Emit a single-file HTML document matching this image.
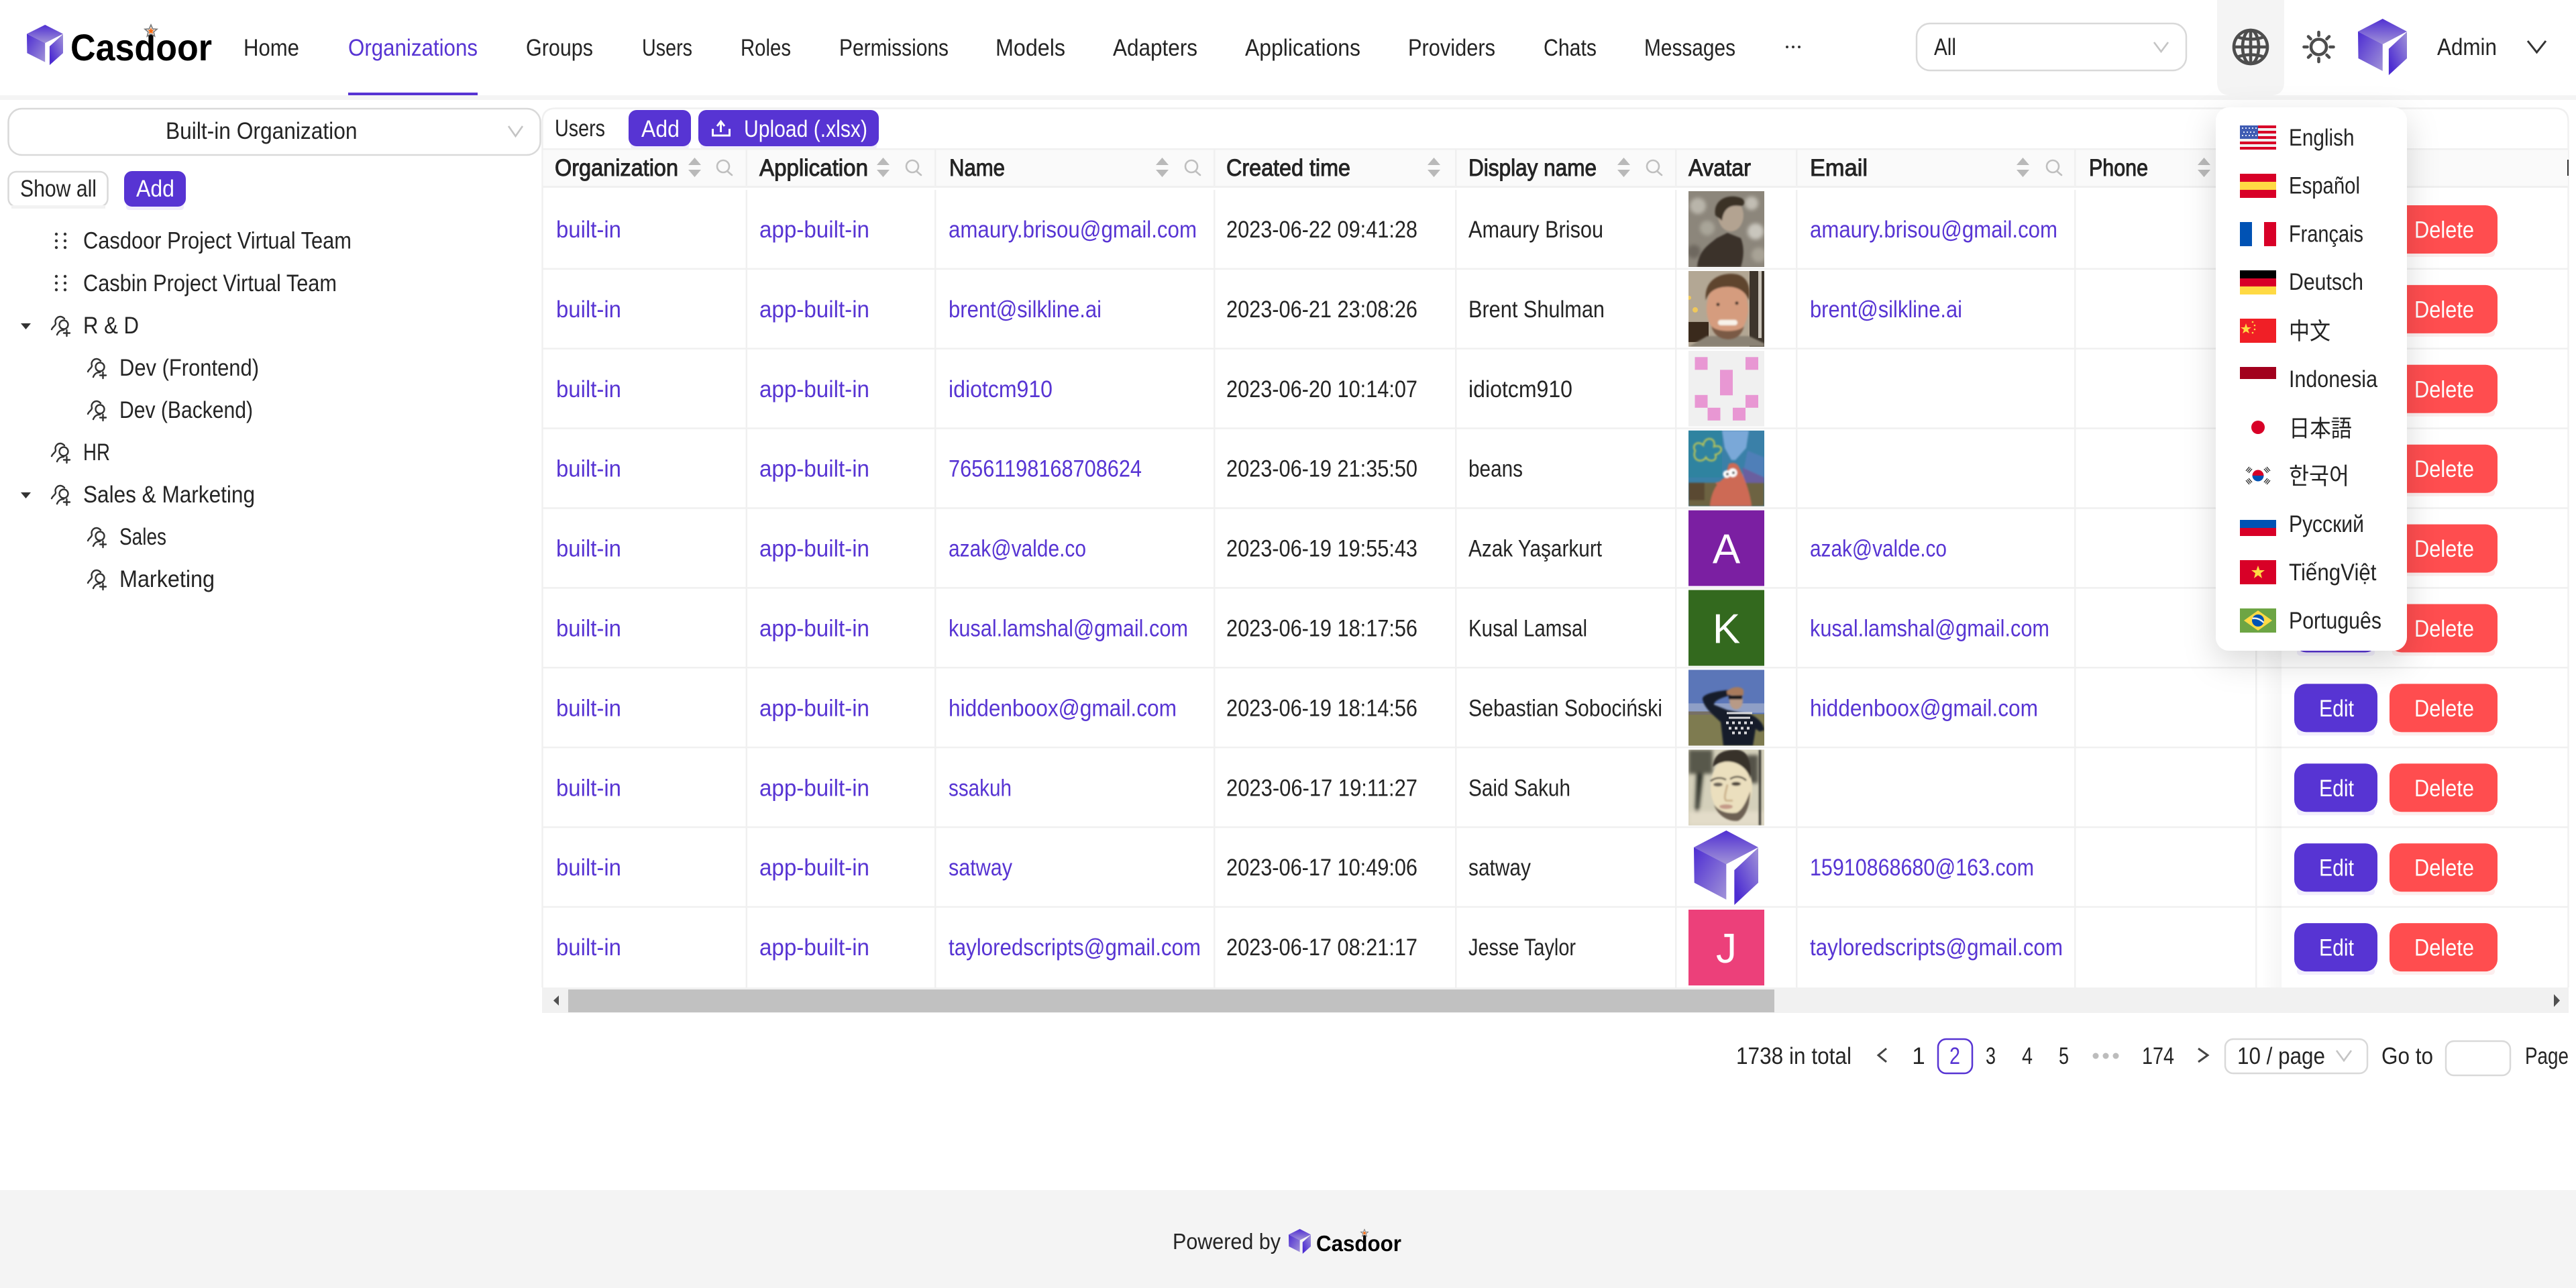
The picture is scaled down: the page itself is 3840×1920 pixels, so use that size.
<!DOCTYPE html>
<html lang="en">
<head>
<meta charset="utf-8">
<title>Casdoor - Users</title>
<style>
html,body{margin:0;padding:0;background:#fff;width:3840px;height:1920px;overflow:hidden}
svg{display:block}
text{font-family:"Liberation Sans","Noto Sans CJK SC",sans-serif;font-size:35px;fill:#242424}
.l{fill:#5734d3}
.w{fill:#fff}
.h{stroke:#242424;stroke-width:1px}
.logo{font-weight:700;fill:#000}
.ln{fill:#f0f0f0}
.btn{fill:#5734d3}
.del{fill:#ff4d4f}
.ico{fill:none;stroke:#333;stroke-width:2.4;stroke-linecap:round}
.sg{fill:#b9b9b9}
.sr{fill:none;stroke:#bfbfbf;stroke-width:2.6;stroke-linecap:round}
.chev{fill:none;stroke:#c4c4c4;stroke-width:2.6}
.box{fill:#fff;stroke:#d9d9d9;stroke-width:2.5}
</style>
</head>
<body>
<svg xmlns="http://www.w3.org/2000/svg" width="3840" height="1920" viewBox="0 0 3840 1920">
<defs>
<linearGradient id="gt" x1="0" y1="0" x2="0" y2="1"><stop offset="0" stop-color="#5030d2"/><stop offset="1" stop-color="#a193d8"/></linearGradient>
<linearGradient id="gl" x1="0" y1="0" x2="1" y2="1"><stop offset="0" stop-color="#4c2cd2"/><stop offset="1" stop-color="#a193d8"/></linearGradient>
<linearGradient id="gr" x1="0" y1="1" x2="1" y2="0"><stop offset=".15" stop-color="#4c2cd2"/><stop offset="1" stop-color="#a193d8"/></linearGradient>
<linearGradient id="fix" x1="0" y1="0" x2="1" y2="0"><stop offset="0" stop-color="#000" stop-opacity="0"/><stop offset="1" stop-color="#000" stop-opacity=".035"/></linearGradient>
<symbol id="cube" viewBox="0 0 288 332" preserveAspectRatio="none">
<polygon points="145,0 288,75 145,150 0,75" fill="url(#gt)"/>
<polygon points="0,75 145,150 145,308 2,233" fill="url(#gl)"/>
<polygon points="288,77 181,177 181,332 288,233" fill="url(#gr)"/>
</symbol>
<g id="sort"><polygon class="sg" points="9.5,235 19,246 0,246"/><polygon class="sg" points="0,253 19,253 9.5,264"/></g>
<g id="srch"><circle class="sr" cx="10" cy="248" r="9"/><path class="sr" d="M16 255 L23 261"/></g>
<g id="ci"><circle class="ico" cx="19" cy="13" r="6.5"/><path class="ico" d="M1 20 C3 15 7 15 7 11 C5 5 10 1 14 1 C17 1 19 3 20 4"/><path class="ico" d="M9 28 C11 23 14 21 19 21"/><path class="ico" d="M23.5 21 v9 M19 25.5 h9"/></g>
<g id="grip" fill="#333"><circle cx="3" cy="3" r="2.2"/><circle cx="16" cy="3" r="2.2"/><circle cx="3" cy="13" r="2.2"/><circle cx="16" cy="13" r="2.2"/><circle cx="3" cy="23" r="2.2"/><circle cx="16" cy="23" r="2.2"/></g>
<g id="star"><polygon points="0,-9 2.6,-3 9,-2.6 4,1.6 5.6,8 0,4.6 -5.6,8 -4,1.6 -9,-2.6 -2.6,-3" fill="#fff" stroke="#777" stroke-width="1.6"/><polygon points="0,-5 1.5,-1.5 5,-1.5 2.3,1 3.2,4.6 0,2.6 -3.2,4.6 -2.3,1 -5,-1.5 -1.5,-1.5" fill="#f46a12"/></g>
<filter id="ds" x="-30%" y="-15%" width="160%" height="135%"><feDropShadow dx="0" dy="16" stdDeviation="24" flood-color="#000" flood-opacity=".15"/></filter>
<filter id="b1" x="-5%" y="-5%" width="110%" height="110%"><feGaussianBlur stdDeviation="1.3"/></filter>
<filter id="b2" x="-10%" y="-10%" width="120%" height="120%"><feGaussianBlur stdDeviation="3"/></filter>
</defs>

<!-- header -->
<rect x="0" y="142" width="3840" height="7" fill="#f4f4f4"/>
<use href="#cube" x="40" y="37" width="54" height="60"/>
<text class="logo" x="105" y="90" textLength="211" lengthAdjust="spacingAndGlyphs" style="font-size:56px">Casdoor</text>
<use href="#star" transform="translate(225,46)"/>
<text x="363" y="83" textLength="83" lengthAdjust="spacingAndGlyphs">Home</text>
<text class="l" x="519" y="83" textLength="193" lengthAdjust="spacingAndGlyphs">Organizations</text>
<rect x="519" y="138" width="193" height="4" class="btn"/>
<text x="784" y="83" textLength="100" lengthAdjust="spacingAndGlyphs">Groups</text>
<text x="957" y="83" textLength="75" lengthAdjust="spacingAndGlyphs">Users</text>
<text x="1104" y="83" textLength="75" lengthAdjust="spacingAndGlyphs">Roles</text>
<text x="1251" y="83" textLength="163" lengthAdjust="spacingAndGlyphs">Permissions</text>
<text x="1484" y="83" textLength="104" lengthAdjust="spacingAndGlyphs">Models</text>
<text x="1659" y="83" textLength="126" lengthAdjust="spacingAndGlyphs">Adapters</text>
<text x="1856" y="83" textLength="172" lengthAdjust="spacingAndGlyphs">Applications</text>
<text x="2099" y="83" textLength="130" lengthAdjust="spacingAndGlyphs">Providers</text>
<text x="2301" y="83" textLength="79" lengthAdjust="spacingAndGlyphs">Chats</text>
<text x="2451" y="83" textLength="136" lengthAdjust="spacingAndGlyphs">Messages</text>
<g fill="#333"><circle cx="2664" cy="70" r="2"/><circle cx="2673" cy="70" r="2"/><circle cx="2682" cy="70" r="2"/></g>

<rect class="box" x="2857" y="35" width="402" height="70" rx="20"/>
<text x="2883" y="82" textLength="33" lengthAdjust="spacingAndGlyphs">All</text>
<path class="chev" d="M3211 63 L3221.5 77 L3232 63"/>

<path d="M3305 0 H3405 V122 Q3405 142 3385 142 H3325 Q3305 142 3305 122 Z" fill="#f4f4f4"/>
<g fill="none" stroke="#4d4d4d" stroke-width="4.6">
<circle cx="3355" cy="70" r="25"/>
<ellipse cx="3355" cy="70" rx="12" ry="25"/>
<path d="M3355 45 V95 M3330 70 H3380 M3335 55 Q3355 62 3375 55 M3335 85 Q3355 78 3375 85"/>
</g>
<g fill="none" stroke="#4d4d4d" stroke-width="4.6" stroke-linecap="round">
<circle cx="3456.5" cy="70" r="11.5"/>
<path d="M3456.5 48 V53 M3456.5 87 V92 M3434.5 70 H3439.5 M3473.5 70 H3478.5 M3441 54.500 L3444.500 58 M3468.500 82 L3472 85.500 M3441 85.500 L3444.500 82 M3468.500 58 L3472 54.500"/>
</g>
<use href="#cube" x="3515" y="28" width="73" height="84"/>
<text x="3633" y="82" textLength="89" lengthAdjust="spacingAndGlyphs">Admin</text>
<path d="M3768 61 L3781.500 78 L3795 61" fill="none" stroke="#333" stroke-width="3"/>

<!-- left panel -->
<rect class="box" x="12.500" y="162" width="793" height="69" rx="20"/>
<text x="247" y="207" textLength="285.500" lengthAdjust="spacingAndGlyphs">Built-in Organization</text>
<path class="chev" d="M758 188 L768.500 203 L779 188"/>
<rect class="box" x="12.500" y="256" width="148" height="52" rx="12"/>
<rect x="17" y="306" width="140" height="5" fill="#f2f2f2"/>
<text x="30" y="293" textLength="114" lengthAdjust="spacingAndGlyphs">Show all</text>
<rect x="188" y="303" width="86" height="10" rx="4" fill="#f0ecfc"/>
<rect class="btn" x="185" y="255" width="92" height="53" rx="12"/>
<text class="w" x="203" y="293" textLength="57" lengthAdjust="spacingAndGlyphs">Add</text>

<use href="#grip" x="81" y="346"/>
<text x="124" y="370.500" textLength="400" lengthAdjust="spacingAndGlyphs">Casdoor Project Virtual Team</text>
<use href="#grip" x="81" y="409"/>
<text x="124" y="434" textLength="378" lengthAdjust="spacingAndGlyphs">Casbin Project Virtual Team</text>
<polygon points="31,482 46,482 38.500,491" fill="#333"/>
<use href="#ci" x="76" y="471"/>
<text x="124" y="497" textLength="83" lengthAdjust="spacingAndGlyphs">R &amp; D</text>
<use href="#ci" x="130" y="534"/>
<text x="178" y="560" textLength="208" lengthAdjust="spacingAndGlyphs">Dev (Frontend)</text>
<use href="#ci" x="130" y="597"/>
<text x="178" y="623" textLength="199" lengthAdjust="spacingAndGlyphs">Dev (Backend)</text>
<use href="#ci" x="76" y="660"/>
<text x="124" y="686" textLength="40" lengthAdjust="spacingAndGlyphs">HR</text>
<polygon points="31,734 46,734 38.500,743" fill="#333"/>
<use href="#ci" x="76" y="723"/>
<text x="124" y="749" textLength="256" lengthAdjust="spacingAndGlyphs">Sales &amp; Marketing</text>
<use href="#ci" x="130" y="786"/>
<text x="178" y="812" textLength="70" lengthAdjust="spacingAndGlyphs">Sales</text>
<use href="#ci" x="130" y="849"/>
<text x="178" y="875" textLength="142" lengthAdjust="spacingAndGlyphs">Marketing</text>

<!-- table card -->
<path d="M808.500 1472 V181 Q808.500 161.500 828 161.500 H3809 Q3828.500 161.500 3828.500 181 V1472" fill="none" stroke="#f0f0f0" stroke-width="2.500"/>
<text x="827" y="203" textLength="75" lengthAdjust="spacingAndGlyphs">Users</text>
<rect x="940" y="210" width="87" height="13" rx="5" fill="#f0ecfc"/>
<rect x="1044" y="210" width="263" height="13" rx="5" fill="#f0ecfc"/>
<rect class="btn" x="937" y="164" width="93" height="54" rx="12"/>
<text class="w" x="956" y="204" textLength="57" lengthAdjust="spacingAndGlyphs">Add</text>
<rect class="btn" x="1041" y="164" width="269" height="54" rx="12"/>
<path d="M1074.500 182 V197 M1069 188 L1074.500 181 L1080 188 M1062.500 192 V202 H1087.500 V192" fill="none" stroke="#fff" stroke-width="3"/>
<text class="w" x="1109" y="204" textLength="184" lengthAdjust="spacingAndGlyphs">Upload (.xlsx)</text>

<rect x="810" y="223" width="3018" height="54" fill="#fafafa"/>
<rect class="ln" x="809" y="221" width="3020" height="2.500"/>
<rect class="ln" x="809" y="277" width="3020" height="3"/>
<!-- vertical separators -->
<g class="ln">
<rect x="1111.500" y="223" width="2.500" height="54"/><rect x="1393" y="223" width="2.500" height="54"/><rect x="1809" y="223" width="2.500" height="54"/><rect x="2169" y="223" width="2.500" height="54"/><rect x="2497" y="223" width="2.500" height="54"/><rect x="2677" y="223" width="2.500" height="54"/><rect x="3092" y="223" width="2.500" height="54"/>
<rect x="1111.500" y="283" width="2.500" height="1189"/><rect x="1393" y="283" width="2.500" height="1189"/><rect x="1809" y="283" width="2.500" height="1189"/><rect x="2169" y="283" width="2.500" height="1189"/><rect x="2497" y="283" width="2.500" height="1189"/><rect x="2677" y="283" width="2.500" height="1189"/><rect x="3092" y="283" width="2.500" height="1189"/><rect x="3362" y="283" width="2.500" height="1189"/>
<rect x="809" y="399.500" width="3020" height="2.500"/><rect x="809" y="518.400" width="3020" height="2.500"/><rect x="809" y="637.300" width="3020" height="2.500"/><rect x="809" y="756.200" width="3020" height="2.500"/><rect x="809" y="875.100" width="3020" height="2.500"/><rect x="809" y="994" width="3020" height="2.500"/><rect x="809" y="1112.900" width="3020" height="2.500"/><rect x="809" y="1231.800" width="3020" height="2.500"/><rect x="809" y="1350.700" width="3020" height="2.500"/>
</g>
<rect x="3371" y="280" width="30" height="1192" fill="url(#fix)"/>

<!-- table head -->
<g class="hd">
<text class="h" x="827" y="262" textLength="184" lengthAdjust="spacingAndGlyphs">Organization</text><use href="#sort" x="1026"/><use href="#srch" x="1068"/>
<text class="h" x="1132" y="262" textLength="162" lengthAdjust="spacingAndGlyphs">Application</text><use href="#sort" x="1307"/><use href="#srch" x="1350"/>
<text class="h" x="1415" y="262" textLength="83" lengthAdjust="spacingAndGlyphs">Name</text><use href="#sort" x="1723"/><use href="#srch" x="1766"/>
<text class="h" x="1828" y="262" textLength="185" lengthAdjust="spacingAndGlyphs">Created time</text><use href="#sort" x="2128"/>
<text class="h" x="2189" y="262" textLength="191" lengthAdjust="spacingAndGlyphs">Display name</text><use href="#sort" x="2411"/><use href="#srch" x="2454"/>
<text class="h" x="2517" y="262" textLength="93" lengthAdjust="spacingAndGlyphs">Avatar</text>
<text class="h" x="2698" y="262" textLength="86" lengthAdjust="spacingAndGlyphs">Email</text><use href="#sort" x="3006"/><use href="#srch" x="3050"/>
<text class="h" x="3114" y="262" textLength="88" lengthAdjust="spacingAndGlyphs">Phone</text><use href="#sort" x="3276"/>
<rect x="3827" y="238" width="2" height="24" fill="#333"/>
</g>

<!-- rows -->
<g>
<text class="l" x="829" y="354" textLength="97" lengthAdjust="spacingAndGlyphs">built-in</text><text class="l" x="1132" y="354" textLength="164" lengthAdjust="spacingAndGlyphs">app-built-in</text>
<text class="l" x="1414" y="354" textLength="370" lengthAdjust="spacingAndGlyphs">amaury.brisou@gmail.com</text>
<text x="1828" y="354" textLength="285" lengthAdjust="spacingAndGlyphs">2023-06-22 09:41:28</text>
<text x="2189" y="354" textLength="201" lengthAdjust="spacingAndGlyphs">Amaury Brisou</text>
<text class="l" x="2698" y="354" textLength="369" lengthAdjust="spacingAndGlyphs">amaury.brisou@gmail.com</text>
</g>
<g transform="translate(0,118.900)">
<text class="l" x="829" y="354" textLength="97" lengthAdjust="spacingAndGlyphs">built-in</text><text class="l" x="1132" y="354" textLength="164" lengthAdjust="spacingAndGlyphs">app-built-in</text>
<text class="l" x="1414" y="354" textLength="228" lengthAdjust="spacingAndGlyphs">brent@silkline.ai</text>
<text x="1828" y="354" textLength="285" lengthAdjust="spacingAndGlyphs">2023-06-21 23:08:26</text>
<text x="2189" y="354" textLength="203" lengthAdjust="spacingAndGlyphs">Brent Shulman</text>
<text class="l" x="2698" y="354" textLength="227" lengthAdjust="spacingAndGlyphs">brent@silkline.ai</text>
</g>
<g transform="translate(0,237.800)">
<text class="l" x="829" y="354" textLength="97" lengthAdjust="spacingAndGlyphs">built-in</text><text class="l" x="1132" y="354" textLength="164" lengthAdjust="spacingAndGlyphs">app-built-in</text>
<text class="l" x="1414" y="354" textLength="155" lengthAdjust="spacingAndGlyphs">idiotcm910</text>
<text x="1828" y="354" textLength="285" lengthAdjust="spacingAndGlyphs">2023-06-20 10:14:07</text>
<text x="2189" y="354" textLength="155" lengthAdjust="spacingAndGlyphs">idiotcm910</text>
</g>
<g transform="translate(0,356.700)">
<text class="l" x="829" y="354" textLength="97" lengthAdjust="spacingAndGlyphs">built-in</text><text class="l" x="1132" y="354" textLength="164" lengthAdjust="spacingAndGlyphs">app-built-in</text>
<text class="l" x="1414" y="354" textLength="288" lengthAdjust="spacingAndGlyphs">76561198168708624</text>
<text x="1828" y="354" textLength="285" lengthAdjust="spacingAndGlyphs">2023-06-19 21:35:50</text>
<text x="2189" y="354" textLength="81" lengthAdjust="spacingAndGlyphs">beans</text>
</g>
<g transform="translate(0,475.600)">
<text class="l" x="829" y="354" textLength="97" lengthAdjust="spacingAndGlyphs">built-in</text><text class="l" x="1132" y="354" textLength="164" lengthAdjust="spacingAndGlyphs">app-built-in</text>
<text class="l" x="1414" y="354" textLength="205" lengthAdjust="spacingAndGlyphs">azak@valde.co</text>
<text x="1828" y="354" textLength="285" lengthAdjust="spacingAndGlyphs">2023-06-19 19:55:43</text>
<text x="2189" y="354" textLength="199" lengthAdjust="spacingAndGlyphs">Azak Yaşarkurt</text>
<text class="l" x="2698" y="354" textLength="204" lengthAdjust="spacingAndGlyphs">azak@valde.co</text>
</g>
<g transform="translate(0,594.500)">
<text class="l" x="829" y="354" textLength="97" lengthAdjust="spacingAndGlyphs">built-in</text><text class="l" x="1132" y="354" textLength="164" lengthAdjust="spacingAndGlyphs">app-built-in</text>
<text class="l" x="1414" y="354" textLength="357" lengthAdjust="spacingAndGlyphs">kusal.lamshal@gmail.com</text>
<text x="1828" y="354" textLength="285" lengthAdjust="spacingAndGlyphs">2023-06-19 18:17:56</text>
<text x="2189" y="354" textLength="177" lengthAdjust="spacingAndGlyphs">Kusal Lamsal</text>
<text class="l" x="2698" y="354" textLength="357" lengthAdjust="spacingAndGlyphs">kusal.lamshal@gmail.com</text>
</g>
<g transform="translate(0,713.400)">
<text class="l" x="829" y="354" textLength="97" lengthAdjust="spacingAndGlyphs">built-in</text><text class="l" x="1132" y="354" textLength="164" lengthAdjust="spacingAndGlyphs">app-built-in</text>
<text class="l" x="1414" y="354" textLength="340" lengthAdjust="spacingAndGlyphs">hiddenboox@gmail.com</text>
<text x="1828" y="354" textLength="285" lengthAdjust="spacingAndGlyphs">2023-06-19 18:14:56</text>
<text x="2189" y="354" textLength="289" lengthAdjust="spacingAndGlyphs">Sebastian Sobociński</text>
<text class="l" x="2698" y="354" textLength="340" lengthAdjust="spacingAndGlyphs">hiddenboox@gmail.com</text>
</g>
<g transform="translate(0,832.300)">
<text class="l" x="829" y="354" textLength="97" lengthAdjust="spacingAndGlyphs">built-in</text><text class="l" x="1132" y="354" textLength="164" lengthAdjust="spacingAndGlyphs">app-built-in</text>
<text class="l" x="1414" y="354" textLength="94" lengthAdjust="spacingAndGlyphs">ssakuh</text>
<text x="1828" y="354" textLength="285" lengthAdjust="spacingAndGlyphs">2023-06-17 19:11:27</text>
<text x="2189" y="354" textLength="152" lengthAdjust="spacingAndGlyphs">Said Sakuh</text>
</g>
<g transform="translate(0,951.200)">
<text class="l" x="829" y="354" textLength="97" lengthAdjust="spacingAndGlyphs">built-in</text><text class="l" x="1132" y="354" textLength="164" lengthAdjust="spacingAndGlyphs">app-built-in</text>
<text class="l" x="1414" y="354" textLength="95" lengthAdjust="spacingAndGlyphs">satway</text>
<text x="1828" y="354" textLength="285" lengthAdjust="spacingAndGlyphs">2023-06-17 10:49:06</text>
<text x="2189" y="354" textLength="93" lengthAdjust="spacingAndGlyphs">satway</text>
<text class="l" x="2698" y="354" textLength="334" lengthAdjust="spacingAndGlyphs">15910868680@163.com</text>
</g>
<g transform="translate(0,1070.100)">
<text class="l" x="829" y="354" textLength="97" lengthAdjust="spacingAndGlyphs">built-in</text><text class="l" x="1132" y="354" textLength="164" lengthAdjust="spacingAndGlyphs">app-built-in</text>
<text class="l" x="1414" y="354" textLength="376" lengthAdjust="spacingAndGlyphs">tayloredscripts@gmail.com</text>
<text x="1828" y="354" textLength="285" lengthAdjust="spacingAndGlyphs">2023-06-17 08:21:17</text>
<text x="2189" y="354" textLength="160" lengthAdjust="spacingAndGlyphs">Jesse Taylor</text>
<text class="l" x="2698" y="354" textLength="377" lengthAdjust="spacingAndGlyphs">tayloredscripts@gmail.com</text>
</g>

<!-- action buttons -->
<g id="acts">
<g><rect x="3424" y="372" width="116" height="11" rx="5" fill="#f2eefd"/><rect x="3566" y="372" width="153" height="11" rx="5" fill="#fdeeee"/><rect class="btn" x="3420" y="306" width="124" height="72" rx="18"/><text class="w" x="3457" y="354.500" textLength="52" lengthAdjust="spacingAndGlyphs">Edit</text><rect class="del" x="3562" y="306" width="161" height="72" rx="18"/><text class="w" x="3599" y="354.500" textLength="89" lengthAdjust="spacingAndGlyphs">Delete</text></g>
<g transform="translate(0,118.900)"><rect x="3424" y="372" width="116" height="11" rx="5" fill="#f2eefd"/><rect x="3566" y="372" width="153" height="11" rx="5" fill="#fdeeee"/><rect class="btn" x="3420" y="306" width="124" height="72" rx="18"/><text class="w" x="3457" y="354.500" textLength="52" lengthAdjust="spacingAndGlyphs">Edit</text><rect class="del" x="3562" y="306" width="161" height="72" rx="18"/><text class="w" x="3599" y="354.500" textLength="89" lengthAdjust="spacingAndGlyphs">Delete</text></g>
<g transform="translate(0,237.800)"><rect x="3424" y="372" width="116" height="11" rx="5" fill="#f2eefd"/><rect x="3566" y="372" width="153" height="11" rx="5" fill="#fdeeee"/><rect class="btn" x="3420" y="306" width="124" height="72" rx="18"/><text class="w" x="3457" y="354.500" textLength="52" lengthAdjust="spacingAndGlyphs">Edit</text><rect class="del" x="3562" y="306" width="161" height="72" rx="18"/><text class="w" x="3599" y="354.500" textLength="89" lengthAdjust="spacingAndGlyphs">Delete</text></g>
<g transform="translate(0,356.700)"><rect x="3424" y="372" width="116" height="11" rx="5" fill="#f2eefd"/><rect x="3566" y="372" width="153" height="11" rx="5" fill="#fdeeee"/><rect class="btn" x="3420" y="306" width="124" height="72" rx="18"/><text class="w" x="3457" y="354.500" textLength="52" lengthAdjust="spacingAndGlyphs">Edit</text><rect class="del" x="3562" y="306" width="161" height="72" rx="18"/><text class="w" x="3599" y="354.500" textLength="89" lengthAdjust="spacingAndGlyphs">Delete</text></g>
<g transform="translate(0,475.600)"><rect x="3424" y="372" width="116" height="11" rx="5" fill="#f2eefd"/><rect x="3566" y="372" width="153" height="11" rx="5" fill="#fdeeee"/><rect class="btn" x="3420" y="306" width="124" height="72" rx="18"/><text class="w" x="3457" y="354.500" textLength="52" lengthAdjust="spacingAndGlyphs">Edit</text><rect class="del" x="3562" y="306" width="161" height="72" rx="18"/><text class="w" x="3599" y="354.500" textLength="89" lengthAdjust="spacingAndGlyphs">Delete</text></g>
<g transform="translate(0,594.500)"><rect x="3424" y="372" width="116" height="11" rx="5" fill="#f2eefd"/><rect x="3566" y="372" width="153" height="11" rx="5" fill="#fdeeee"/><rect class="btn" x="3420" y="306" width="124" height="72" rx="18"/><text class="w" x="3457" y="354.500" textLength="52" lengthAdjust="spacingAndGlyphs">Edit</text><rect class="del" x="3562" y="306" width="161" height="72" rx="18"/><text class="w" x="3599" y="354.500" textLength="89" lengthAdjust="spacingAndGlyphs">Delete</text></g>
<g transform="translate(0,713.400)"><rect x="3424" y="372" width="116" height="11" rx="5" fill="#f2eefd"/><rect x="3566" y="372" width="153" height="11" rx="5" fill="#fdeeee"/><rect class="btn" x="3420" y="306" width="124" height="72" rx="18"/><text class="w" x="3457" y="354.500" textLength="52" lengthAdjust="spacingAndGlyphs">Edit</text><rect class="del" x="3562" y="306" width="161" height="72" rx="18"/><text class="w" x="3599" y="354.500" textLength="89" lengthAdjust="spacingAndGlyphs">Delete</text></g>
<g transform="translate(0,832.300)"><rect x="3424" y="372" width="116" height="11" rx="5" fill="#f2eefd"/><rect x="3566" y="372" width="153" height="11" rx="5" fill="#fdeeee"/><rect class="btn" x="3420" y="306" width="124" height="72" rx="18"/><text class="w" x="3457" y="354.500" textLength="52" lengthAdjust="spacingAndGlyphs">Edit</text><rect class="del" x="3562" y="306" width="161" height="72" rx="18"/><text class="w" x="3599" y="354.500" textLength="89" lengthAdjust="spacingAndGlyphs">Delete</text></g>
<g transform="translate(0,951.200)"><rect x="3424" y="372" width="116" height="11" rx="5" fill="#f2eefd"/><rect x="3566" y="372" width="153" height="11" rx="5" fill="#fdeeee"/><rect class="btn" x="3420" y="306" width="124" height="72" rx="18"/><text class="w" x="3457" y="354.500" textLength="52" lengthAdjust="spacingAndGlyphs">Edit</text><rect class="del" x="3562" y="306" width="161" height="72" rx="18"/><text class="w" x="3599" y="354.500" textLength="89" lengthAdjust="spacingAndGlyphs">Delete</text></g>
<g transform="translate(0,1070.100)"><rect x="3424" y="372" width="116" height="11" rx="5" fill="#f2eefd"/><rect x="3566" y="372" width="153" height="11" rx="5" fill="#fdeeee"/><rect class="btn" x="3420" y="306" width="124" height="72" rx="18"/><text class="w" x="3457" y="354.500" textLength="52" lengthAdjust="spacingAndGlyphs">Edit</text><rect class="del" x="3562" y="306" width="161" height="72" rx="18"/><text class="w" x="3599" y="354.500" textLength="89" lengthAdjust="spacingAndGlyphs">Delete</text></g>
</g>

<!-- avatars -->
<svg x="2517" y="285" width="113" height="113" viewBox="0 0 113 113">
<rect width="113" height="113" fill="#8c867b"/>
<g filter="url(#b2)"><circle cx="14" cy="22" r="12" fill="#b9b5aa"/><circle cx="28" cy="55" r="11" fill="#a9a599"/><circle cx="100" cy="60" r="12" fill="#c9c6bd"/><circle cx="94" cy="18" r="10" fill="#c2beb4"/><circle cx="105" cy="95" r="11" fill="#a8a396"/><circle cx="8" cy="90" r="10" fill="#6e685e"/></g>
<g filter="url(#b1)"><path d="M13 113 C15 88 30 80 42 70 L58 62 L78 70 C84 85 82 100 78 113 Z" fill="#3a332b"/><ellipse cx="63" cy="36" rx="19" ry="24" fill="#b3a391"/><path d="M40 36 C36 12 60 3 78 10 C86 13 84 24 76 22 C62 20 52 26 50 44 Z" fill="#3a3026"/></g>
</svg>
<svg x="2517" y="403.900" width="113" height="113" viewBox="0 0 113 113">
<rect width="113" height="113" fill="#b3a794"/>
<rect x="91" y="0" width="22" height="113" fill="#3d352c"/><rect x="104" y="0" width="5" height="100" fill="#c9c3b8"/>
<rect x="0" y="76" width="30" height="30" fill="#3a2a1c"/>
<circle cx="10" cy="58" r="4" fill="#f0c85a"/><circle cx="1" cy="40" r="3" fill="#f0c85a"/>
<g filter="url(#b1)"><path d="M0 113 L28 97 L90 97 L113 108 V113 Z" fill="#8b8375"/><ellipse cx="58" cy="56" rx="31" ry="42" fill="#d59c7e"/><path d="M26 44 C22 12 50 1 72 5 C90 9 93 28 90 44 C84 28 70 22 52 24 C38 26 30 32 26 44 Z" fill="#5e452f"/><path d="M34 82 C38 98 50 102 60 102 C72 102 80 94 83 82 C76 92 42 92 34 82 Z" fill="#7a5a44"/><rect x="44" y="73" width="29" height="8" rx="4" fill="#f8f3ea"/><circle cx="44" cy="50" r="2.500" fill="#3a2e28"/><circle cx="72" cy="48" r="2.500" fill="#3a2e28"/></g>
</svg>
<svg x="2517" y="522.800" width="113" height="113" viewBox="0 0 113 113">
<rect width="113" height="113" fill="#f0f0f0"/>
<g fill="#e897d3"><rect x="9.500" y="9.500" width="19" height="19"/><rect x="85" y="9.500" width="19" height="19"/><rect x="47" y="28.500" width="19" height="38"/><rect x="9.500" y="66" width="19" height="19"/><rect x="85" y="66" width="19" height="19"/><rect x="28.500" y="85" width="19" height="19"/><rect x="66" y="85" width="19" height="19"/></g>
</svg>
<svg x="2517" y="641.700" width="113" height="113" viewBox="0 0 113 113">
<rect width="113" height="113" fill="#3a80a8"/>
<rect x="0" y="0" width="50" height="70" fill="#2f83a0"/>
<g filter="url(#b1)">
<path d="M50 0 H90 L86 26 L70 44 H64 L54 26 Z" fill="#7aa8d8"/>
<path d="M88 30 L113 40 V70 L80 70 Z" fill="#4f7fb8"/>
<path d="M80 55 L113 70 V92 L85 85 Z" fill="#6a5f9f"/>
<path d="M10 30 C4 22 14 14 22 22 C24 8 42 10 38 24 C52 20 52 34 40 36 C44 46 30 48 26 40 C20 50 4 44 10 30 Z" fill="none" stroke="#b9c458" stroke-width="2.500"/>
<rect x="0" y="78" width="113" height="35" fill="#6d6443"/>
<rect x="0" y="78" width="24" height="26" fill="#5a4a30"/>
<path d="M32 113 C34 92 42 78 54 70 L60 50 C68 46 74 50 76 56 C86 76 92 96 94 113 Z" fill="#cd6a55"/>
<path d="M40 78 L60 72 L58 84 L46 84 Z" fill="#cd6a55"/>
<circle cx="57" cy="65" r="5.500" fill="#fff"/><circle cx="66" cy="63" r="6.500" fill="#fff"/><circle cx="58" cy="65" r="2" fill="#222"/><circle cx="67" cy="63" r="2" fill="#222"/>
</g>
</svg>
<svg x="2517" y="760.600" width="113" height="113" viewBox="0 0 113 113"><rect width="113" height="113" fill="#7b1fa2"/><text class="w" x="56.500" y="79" text-anchor="middle" style="font-size:62px">A</text></svg>
<svg x="2517" y="879.500" width="113" height="113" viewBox="0 0 113 113"><rect width="113" height="113" fill="#33691e"/><text class="w" x="56.500" y="79" text-anchor="middle" style="font-size:62px">K</text></svg>
<svg x="2517" y="998.500" width="113" height="113" viewBox="0 0 113 113">
<rect width="113" height="113" fill="#5b76b8"/><rect y="50" width="113" height="14" fill="#8f9fc6"/>
<rect y="66" width="113" height="47" fill="#7e7b50"/><rect y="62" width="42" height="5" fill="#766f66"/>
<g filter="url(#b1)"><path d="M21 44 C20 36 40 32 60 30 L62 38 C48 42 38 46 38 52 L58 60 L92 66 C104 72 112 80 113 90 L106 92 L100 88 L96 113 L52 113 L48 78 C36 66 24 58 21 44 Z" fill="#121a2b"/><ellipse cx="71" cy="46" rx="10" ry="13" fill="#b89a86"/><path d="M57 32 C66 24 78 24 82 30 L82 38 L58 37 Z" fill="#a87a5c"/><rect x="60" y="38" width="20" height="6" fill="#15151c"/></g>
<g fill="#d9d9dc"><rect x="57" y="63" width="38" height="3"/><rect x="60" y="70" width="32" height="3"/><rect x="56" y="77" width="4" height="4"/><rect x="65" y="77" width="4" height="4"/><rect x="74" y="77" width="4" height="4"/><rect x="83" y="77" width="4" height="4"/><rect x="92" y="77" width="4" height="4"/><rect x="60" y="85" width="4" height="4"/><rect x="69" y="85" width="4" height="4"/><rect x="78" y="85" width="4" height="4"/><rect x="87" y="85" width="4" height="4"/><rect x="65" y="92" width="4" height="4"/><rect x="74" y="92" width="4" height="4"/><rect x="83" y="92" width="4" height="4"/></g>
</svg>
<svg x="2517" y="1117.500" width="113" height="113" viewBox="0 0 113 113">
<rect width="113" height="113" fill="#d4d0bb"/>
<g filter="url(#b2)"><rect x="0" y="0" width="36" height="36" fill="#59584c"/><path d="M12 34 L22 36 L15 94 L10 92 Z" fill="#2a2d26"/><rect x="86" y="8" width="18" height="42" fill="#54524a"/><rect x="0" y="92" width="113" height="21" fill="#e3dcc9"/></g>
<g filter="url(#b1)"><rect x="105" y="0" width="3" height="113" fill="#2c2c26"/>
<ellipse cx="64" cy="56" rx="31" ry="44" fill="#ebdfbe"/>
<path d="M36 26 C38 4 54 0 72 0 C90 2 94 18 92 44 C88 26 70 16 54 18 C46 20 40 22 36 26 Z" fill="#38302a"/>
<path d="M38 82 C44 100 62 108 74 106 C86 100 92 80 92 62 C86 78 80 90 72 94 C58 96 46 92 38 82 Z" fill="#6d6152"/>
<path d="M33 47 C40 41 50 41 56 45" stroke="#4c4238" stroke-width="2.500" fill="none"/><path d="M62 44 C70 38 80 40 86 46" stroke="#4c4238" stroke-width="2.500" fill="none"/>
<ellipse cx="44" cy="52" rx="7" ry="3" fill="#6b6256"/><ellipse cx="71" cy="51" rx="7" ry="3" fill="#50473e"/>
<path d="M58 52 C56 62 52 72 56 76 L66 76" stroke="#cbb28c" stroke-width="3" fill="none"/>
<ellipse cx="56" cy="85" rx="10" ry="3.500" fill="#c49a88"/></g>
</svg>
<use href="#cube" x="2525" y="1238" width="96" height="111"/>
<svg x="2517" y="1356" width="113" height="113" viewBox="0 0 113 113"><rect width="113" height="113" fill="#ec407a"/><text class="w" x="56.500" y="79" text-anchor="middle" style="font-size:62px">J</text></svg>

<!-- scrollbar -->
<rect x="808" y="1472" width="3021" height="38" fill="#f1f1f1"/>
<rect x="847" y="1475" width="1798" height="34" fill="#c1c1c1"/>
<polygon points="833,1484 833,1499 825,1491.500" fill="#505050"/>
<polygon points="3807,1482 3807,1501 3816,1491.500" fill="#505050"/>

<!-- pagination -->
<text x="2588" y="1586" textLength="172" lengthAdjust="spacingAndGlyphs">1738 in total</text>
<path d="M2812 1563 L2800 1573 L2812 1583" fill="none" stroke="#444" stroke-width="3"/>
<text x="2860" y="1586" text-anchor="middle">1</text>
<rect x="2889" y="1549" width="51" height="51" rx="12" fill="#fff" stroke="#5734d3" stroke-width="2.500"/>
<text class="l" x="2906" y="1586" textLength="16" lengthAdjust="spacingAndGlyphs">2</text>
<text x="2960" y="1586" textLength="15" lengthAdjust="spacingAndGlyphs">3</text>
<text x="3014" y="1586" textLength="16" lengthAdjust="spacingAndGlyphs">4</text>
<text x="3069" y="1586" textLength="15" lengthAdjust="spacingAndGlyphs">5</text>
<g fill="#bcbcbc"><circle cx="3124" cy="1574" r="4.500"/><circle cx="3139" cy="1574" r="4.500"/><circle cx="3154" cy="1574" r="4.500"/></g>
<text x="3193" y="1586" textLength="48" lengthAdjust="spacingAndGlyphs">174</text>
<path d="M3277 1563 L3291 1573 L3277 1583" fill="none" stroke="#444" stroke-width="3"/>
<rect class="box" x="3317" y="1549" width="212" height="51" rx="12"/>
<text x="3335" y="1586" textLength="131" lengthAdjust="spacingAndGlyphs">10 / page</text>
<path class="chev" d="M3483 1566 L3494 1581 L3505 1566"/>
<text x="3550" y="1586" textLength="77" lengthAdjust="spacingAndGlyphs">Go to</text>
<rect class="box" x="3646" y="1552" width="96" height="51" rx="12"/>
<text x="3764" y="1586" textLength="65" lengthAdjust="spacingAndGlyphs">Page</text>

<!-- footer -->
<rect x="0" y="1774" width="3840" height="146" fill="#f4f4f4"/>
<text x="1748" y="1862" textLength="161" lengthAdjust="spacingAndGlyphs" style="font-size:33px">Powered by</text>
<use href="#cube" x="1921" y="1832" width="33" height="37"/>
<text class="logo" x="1962" y="1865" textLength="127" lengthAdjust="spacingAndGlyphs" style="font-size:33px">Casdoor</text>
<use href="#star" transform="translate(2034,1838) scale(.6)"/>

<!-- language dropdown -->
<rect x="3303" y="160" width="285" height="810" rx="20" fill="#fff" filter="url(#ds)"/>
<g>
<rect x="3339" y="187" width="54" height="36" fill="#f0f0f0"/>
<g fill="#d80027"><rect x="3339" y="187" width="54" height="4"/><rect x="3339" y="195" width="54" height="4"/><rect x="3339" y="203" width="54" height="4"/><rect x="3339" y="211" width="54" height="4"/><rect x="3339" y="219" width="54" height="4"/></g>
<rect x="3339" y="187" width="27" height="20" fill="#3f5cb3"/>
<g fill="#dfe4f5"><rect x="3342" y="190" width="2" height="2"/><rect x="3347" y="190" width="2" height="2"/><rect x="3352" y="190" width="2" height="2"/><rect x="3357" y="190" width="2" height="2"/><rect x="3362" y="190" width="2" height="2"/><rect x="3344" y="196" width="2" height="2"/><rect x="3349" y="196" width="2" height="2"/><rect x="3354" y="196" width="2" height="2"/><rect x="3359" y="196" width="2" height="2"/><rect x="3342" y="201" width="2" height="2"/><rect x="3347" y="201" width="2" height="2"/><rect x="3352" y="201" width="2" height="2"/><rect x="3357" y="201" width="2" height="2"/><rect x="3362" y="201" width="2" height="2"/></g>
<text x="3412" y="217" textLength="97.500" lengthAdjust="spacingAndGlyphs">English</text>

<rect x="3339" y="259" width="54" height="36" fill="#d80027"/><rect x="3339" y="271" width="54" height="12" fill="#ffda44"/>
<text x="3412" y="288.500" textLength="106" lengthAdjust="spacingAndGlyphs">Español</text>

<rect x="3339" y="331" width="18" height="36" fill="#0052b4"/><rect x="3375" y="331" width="18" height="36" fill="#d80027"/>
<text x="3412" y="360.500" textLength="111" lengthAdjust="spacingAndGlyphs">Français</text>

<rect x="3339" y="403" width="54" height="12" fill="#000"/><rect x="3339" y="415" width="54" height="12" fill="#d80027"/><rect x="3339" y="427" width="54" height="12" fill="#ffda44"/>
<text x="3412" y="432" textLength="111" lengthAdjust="spacingAndGlyphs">Deutsch</text>

<rect x="3339" y="475" width="54" height="36" fill="#f01f26"/>
<polygon points="3348,482 3350,488 3356,488 3351,491.500 3353,497 3348,494 3343,497 3345,491.500 3340,488 3346,488" fill="#ffda44"/>
<g fill="#ffda44"><circle cx="3358" cy="480" r="1.300"/><circle cx="3361" cy="485" r="1.300"/><circle cx="3361" cy="491" r="1.300"/><circle cx="3358" cy="496" r="1.300"/></g>
<text x="3412" y="506" textLength="62" lengthAdjust="spacingAndGlyphs" style="font-family:'Liberation Sans','Noto Sans CJK SC',sans-serif">中文</text>

<rect x="3339" y="547" width="54" height="18" fill="#a2001d"/>
<text x="3412" y="577" textLength="132" lengthAdjust="spacingAndGlyphs">Indonesia</text>

<circle cx="3366" cy="637" r="10" fill="#d80027"/>
<text x="3412" y="651" textLength="94" lengthAdjust="spacingAndGlyphs" style="font-family:'Liberation Sans','Noto Sans CJK JP',sans-serif">日本語</text>

<path d="M3357.500 709 A8.500 8.500 0 0 1 3374.500 709 Z" fill="#d80027"/><path d="M3357.500 709 A8.500 8.500 0 0 0 3374.500 709 Z" fill="#0052b4"/>
<g stroke="#222" stroke-width="1.300"><path d="M3348 702 L3353 696 M3350 703.500 L3355 697.500 M3352 705 L3357 699 M3375 699 L3380 705 M3377 697.500 L3382 703.500 M3379 696 L3384 702 M3348 716 L3353 722 M3350 714.500 L3355 720.500 M3352 713 L3357 719 M3375 719 L3380 713 M3377 720.500 L3382 714.500 M3379 722 L3384 716"/></g>
<text x="3412" y="722" textLength="90" lengthAdjust="spacingAndGlyphs" style="font-family:'Liberation Sans','Noto Sans CJK KR',sans-serif">한국어</text>

<rect x="3339" y="775" width="54" height="12" fill="#0052b4"/><rect x="3339" y="787" width="54" height="12" fill="#d80027"/>
<text x="3412" y="793" textLength="112" lengthAdjust="spacingAndGlyphs">Русский</text>

<rect x="3339" y="835" width="54" height="36" fill="#d80027"/>
<polygon points="3366,843 3368.500,850 3376,850 3370,854.500 3372,862 3366,857.500 3360,862 3362,854.500 3356,850 3363.500,850" fill="#ffda44"/>
<text x="3412" y="865" textLength="130.500" lengthAdjust="spacingAndGlyphs">TiếngViệt</text>

<rect x="3339" y="907" width="54" height="36" fill="#6da544"/>
<polygon points="3366,910 3387,925 3366,940 3345,925" fill="#ffda44"/>
<circle cx="3366" cy="925" r="9" fill="#0052b4"/><path d="M3357.500 922 Q3366 920 3374.500 928" stroke="#f0f0f0" stroke-width="2.500" fill="none"/>
<text x="3412" y="937" textLength="138" lengthAdjust="spacingAndGlyphs">Português</text>
</g>
</svg>
</body>
</html>
